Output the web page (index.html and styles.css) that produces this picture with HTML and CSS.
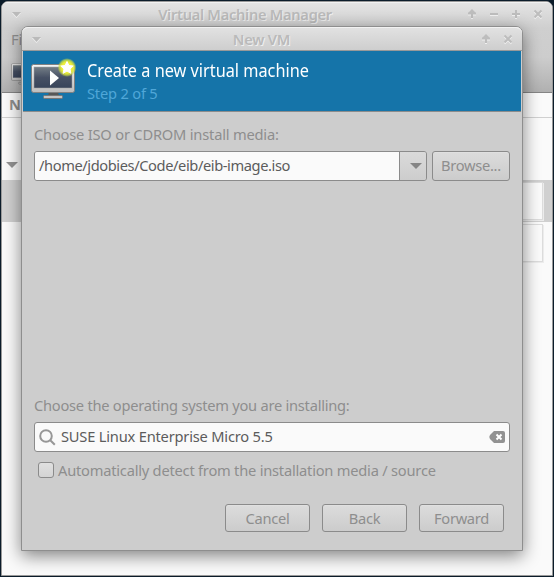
FILE: index.html
```html
<!DOCTYPE html>
<html lang="en">
<head>
<meta charset="utf-8">
<title>Virtual Machine Manager</title>
<link rel="stylesheet" href="styles.css">
</head>
<body>
<div class="desktop">
  <section class="manager">
    <div class="chrome">
      <header class="titlebar">
        <svg class="menu-mark" viewBox="0 0 9 6"><path d="M0 0h9L4.500 5z"/></svg>
        <h1>Virtual Machine Manager</h1>
        <div class="controls">
          <svg viewBox="0 0 10 10"><path d="M5 9V2M2 4.500 5 1.500 8 4.500M1 4.500h8"/></svg>
          <svg viewBox="0 0 10 10"><path d="M1 5h8"/></svg>
          <svg viewBox="0 0 10 10"><path d="M1 5h8M5 1v8"/></svg>
          <svg viewBox="0 0 10 10"><path d="m1.500 1.500 7 7M8.500 1.500l-7 7"/></svg>
        </div>
      </header>
      <div class="menubar">File</div>
      <div class="toolbar">
        <svg width="28" height="24" viewBox="0 2 46 40"><use href="#monitor"/></svg>
      </div>
    </div>
    <div class="columns">Name</div>
    <div class="connection"><svg width="12" height="7" viewBox="0 0 12 7"><path d="M0 0h12L6 6z" fill="#929292"/></svg></div>
    <div class="vm selected"><div class="graph"></div></div>
    <div class="vm"><div class="graph"></div></div>
  </section>

  <section class="dialog">
    <header class="titlebar">
      <svg class="menu-mark" viewBox="0 0 9 6"><path d="M0 0h9L4.500 5z"/></svg>
      <h2>New VM</h2>
      <div class="controls">
        <svg viewBox="0 0 10 10"><path d="M5 9V2M2 4.500 5 1.500 8 4.500M1 4.500h8"/></svg>
        <svg viewBox="0 0 10 10"><path d="m1.500 1.500 7 7M8.500 1.500l-7 7"/></svg>
      </div>
    </header>
    <div class="banner">
      <svg width="46" height="42" viewBox="0 0 46 42">
        <defs>
          <linearGradient id="screen" x2="0" y2="1"><stop stop-color="#747e86"/><stop offset=".5" stop-color="#465064"/><stop offset="1" stop-color="#38445a"/></linearGradient>
          <linearGradient id="bezel" x2="0" y2="1"><stop stop-color="#f5f5f5"/><stop offset="1" stop-color="#bdbdbd"/></linearGradient>
          <radialGradient id="glow"><stop stop-color="#ffff70"/><stop offset=".6" stop-color="#e8ec38"/><stop offset=".8" stop-color="#d2e03d" stop-opacity=".75"/><stop offset="1" stop-color="#b8d050" stop-opacity="0"/></radialGradient>
          <g id="monitor">
            <path d="M18 34h9l1 4H17z" fill="#575757"/>
            <rect x="12.500" y="37.500" width="19" height="3" rx="1" fill="#c4c4c4" stroke="#777"/>
            <rect x=".5" y="6.500" width="43" height="28" rx="2" fill="url(#bezel)" stroke="#818181"/>
            <rect x="3" y="9" width="38" height="21" fill="url(#screen)" stroke="#a4a4a4" stroke-width=".5"/>
          </g>
        </defs>
        <use href="#monitor"/>
        <path d="M19 12.500v15l9-7.500z" fill="#fff"/>
        <circle cx="36" cy="9.500" r="9.500" fill="url(#glow)"/>
        <path d="m36 3.500 1.900 4 4.300.5-3.200 3 .9 4.300-3.900-2.200-3.900 2.200.9-4.300-3.200-3 4.300-.5z" fill="#fff" stroke="#fff" stroke-linejoin="round"/>
      </svg>
      <div class="heading">
        <p class="title">Create a new virtual machine</p>
        <p class="step">Step 2 of 5</p>
      </div>
    </div>
    <div class="content">
      <label class="caption media-caption">Choose ISO or CDROM install media:</label>
      <div class="media-row">
        <div class="combo">
          <div class="path">/home/jdobies/Code/eib/eib-image.iso</div>
          <div class="drop"><svg width="12" height="6" viewBox="0 0 12 6"><path d="M0 0h12L6 6z" fill="#858585"/></svg></div>
        </div>
        <button class="browse">Browse...</button>
      </div>
      <label class="caption os-caption">Choose the operating system you are installing:</label>
      <div class="search">
        <svg width="17" height="17" viewBox="0 0 17 17" fill="none" stroke="#979797" stroke-width="2"><circle cx="7" cy="7" r="5.800"/><path d="m11 11 4.800 4.800"/></svg>
        <span>SUSE Linux Enterprise Micro 5.5</span>
        <svg class="clear" width="16" height="12" viewBox="0 0 16 12"><path d="M5 0h9q2 0 2 2v8q0 2-2 2H5L1.500 8.500Q-.8 6 1.500 3.500z" fill="#929292"/><path d="m7.500 3.500 5 5m0-5-5 5" stroke="#fff" stroke-width="2"/></svg>
      </div>
      <div class="detect"><i class="check"></i><span>Automatically detect from the installation media / source</span></div>
      <footer class="actions">
        <button>Cancel</button><button>Back</button><button>Forward</button>
      </footer>
    </div>
  </section>
</div>
</body>
</html>
```

FILE: styles.css
```css
* { box-sizing: border-box; }
body {
  margin: 0;
  background: #0b1c2a;
  color: #8e8e8e;
  font: 14.67px/20px "Noto Sans", sans-serif;
  letter-spacing: -.2px;
  overflow: hidden;
}
h1, h2, p { margin: 0; }
.desktop { position: relative; width: 554px; height: 577px; padding: 1px; overflow: hidden; }
.manager {
  height: 575px;
  border: 1px solid #999;
  border-radius: 7px 7px 0 0;
  background: #fafafa;
  overflow: hidden;
}
.chrome { height: 91px; background: linear-gradient(#e4e4e4, #cfcfcf 26px, #cdcdcd 55px, #b0b0b0); border-bottom: 1px solid #858585; }
.titlebar { display: flex; align-items: center; justify-content: center; position: relative; height: 25px; box-shadow: inset 0 1px #f2f2f2; }
.titlebar h1, .titlebar h2 { color: #bababa; font-size: 14.67px; line-height: 24px; font-weight: 600; text-shadow: 1px 1px #efefef; white-space: nowrap; }
.titlebar h1 { padding: 0 64px 1px 0; letter-spacing: -.3px; }
.menu-mark { position: absolute; left: 10px; top: 10px; width: 9px; height: 6px; fill: #bababa; filter: drop-shadow(0 1px #f0f0f0); }
.controls { position: absolute; right: 9px; top: 7px; display: flex; gap: 12px; }
.controls svg { width: 10px; height: 10px; fill: none; stroke: #bdbdbd; stroke-width: 2; filter: drop-shadow(0 1px #f0f0f0); }
.menubar { height: 27px; padding: 2px 9px; }
.toolbar { padding: 7px 9px 0; }
.toolbar svg { display: block; }
.columns { height: 25px; padding: 1px 7px; border-bottom: 1px solid #d0d0d0; font-weight: 700; letter-spacing: 0; }
.connection { height: 62px; padding: 44px 4px 0; }
.connection svg { display: block; }
.vm { height: 42px; padding: 2px 9px 0 0; display: flex; justify-content: flex-end; }
.vm.selected { background: #d0d0d0; }
.graph { width: 80px; height: 38px; border: 1px solid #dcdcdc; background: #fafafa; box-shadow: 1px 1px #ececec; }
.dialog {
  position: absolute;
  left: 21px;
  top: 26px;
  width: 502px;
  height: 525px;
  border: 1px solid #8e8e8e;
  border-radius: 7px 7px 0 0;
  background: #cdcdcd;
  box-shadow: 0 5px 17px rgba(0, 0, 0, .48);
}
.dialog .titlebar { height: 24px; border-radius: 6px 6px 0 0; background: linear-gradient(#e2e2e2, #cecece); border-bottom: 1px solid #999; }
.dialog .titlebar h2 { padding-right: 21px; }
.banner { display: flex; height: 61px; margin: 0 1px; padding: 7px 8px; background: #1574a9; border-bottom: 1px solid #8c8c8c; }
.banner svg { flex: none; }
.heading { padding-left: 10px; white-space: nowrap; }
.title { color: #fff; font-size: 17.6px; line-height: 24px; letter-spacing: 0; transform: scaleX(.925); transform-origin: left; }
.step { color: #50a7d8; line-height: 23px; }
.content { padding: 12px 12px 0; }
.caption { display: block; white-space: nowrap; }
.media-row { display: flex; gap: 5px; margin-top: 7px; height: 30px; }
.combo { display: flex; width: 393px; border: 1px solid #8b8b8b; border-radius: 3px; overflow: hidden; }
.path { width: 365px; padding: 3px 4px; background: #fafafa; color: #5c5c5c; border-right: 1px solid #8b8b8b; white-space: nowrap; letter-spacing: -.41px; }
.drop { flex: 1; display: grid; place-items: center; padding-left: 6px; background: linear-gradient(#dadada, #cdcdcd); }
button { width: 85px; height: 28px; padding: 0; border: 1px solid #8b8b8b; border-radius: 3px; background: linear-gradient(#dcdcdc, #cccccc); box-shadow: inset 0 1px #e0e0e0; color: #8e8e8e; font: inherit; letter-spacing: -.3px; }
.browse { width: 78px; height: 30px; padding-bottom: 2px; }
.os-caption { margin-top: 214px; letter-spacing: -.25px; }
.search { display: flex; align-items: center; height: 30px; margin-top: 7px; padding: 0 4px; border: 1px solid #8b8b8b; border-radius: 3px; background: #fafafa; color: #5c5c5c; }
.search span { margin-left: 5px; padding-bottom: 2px; }
.clear { margin-left: auto; }
.detect { display: flex; align-items: center; gap: 4px; height: 20px; margin: 8px 0 0 4px; white-space: nowrap; letter-spacing: -.22px; }
.check { width: 16px; height: 16px; border: 1px solid #8b8b8b; border-radius: 3px; background: linear-gradient(#e0e0e0, #d4d4d4); }
.actions { display: flex; justify-content: flex-end; gap: 12px; margin: 24px 6px 0 0; }
```
